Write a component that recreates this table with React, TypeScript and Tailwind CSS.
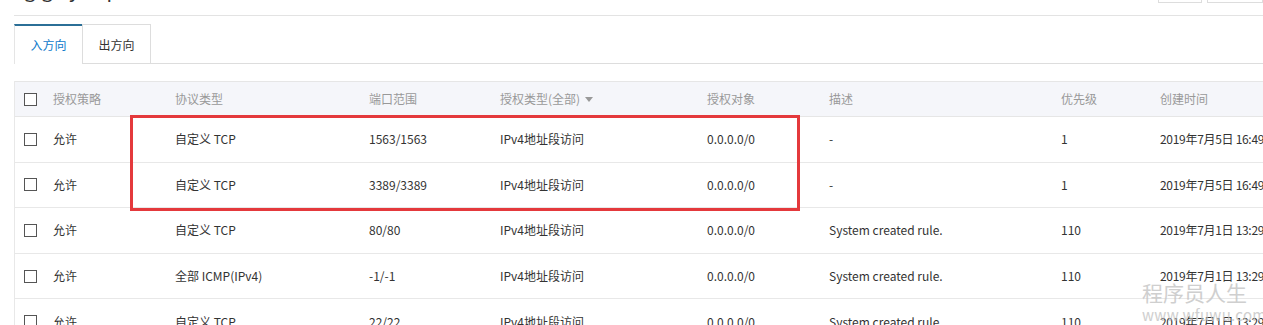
import React from 'react'

const cols = 'grid grid-cols-[38px_122px_194px_131px_207px_122px_232px_99px_1fr]'

const rows = [
  { proto: '自定义 TCP', port: '1563/1563', desc: '-', prio: '1', time: '2019年7月5日 16:49:12' },
  { proto: '自定义 TCP', port: '3389/3389', desc: '-', prio: '1', time: '2019年7月5日 16:49:12' },
  { proto: '自定义 TCP', port: '80/80', desc: 'System created rule.', prio: '110', time: '2019年7月1日 13:29:40' },
  { proto: '全部 ICMP(IPv4)', port: '-1/-1', desc: 'System created rule.', prio: '110', time: '2019年7月1日 13:29:40' },
  { proto: '自定义 TCP', port: '22/22', desc: 'System created rule.', prio: '110', time: '2019年7月1日 13:29:40' },
]

function Box() {
  return <span className="block w-[13px] h-[13px] border border-[#555] bg-white" />
}

export default function App() {
  return (
    <div
      className="relative w-[1263px] h-[325px] overflow-hidden bg-white text-[12px] text-[#333]"
      style={{ fontFamily: '"Noto Sans CJK SC", "Noto Sans", sans-serif' }}
    >
      {/* page head */}
      <div className="flex items-end justify-between h-[16px] pl-[10px] border-b border-[#e3e3e3] ml-[14px]">
        <div className="text-[20px] leading-none text-[#333] mb-[16px] tracking-[6px]">gg y&nbsp;&nbsp;p</div>
        <div className="flex gap-[5px] self-start -mt-[20px]">
          <span className="block w-[44px] h-[23px] border border-[#ddd]" />
          <span className="block w-[56px] h-[23px] border border-[#ddd]" />
        </div>
      </div>

      {/* tabs */}
      <div className="flex mt-[8px] ml-[14px] h-[40px] border-b border-[#ddd]">
        <div className="w-[68px] h-[40px] -mb-px border-t-2 border-l border-[#2b6f97] border-l-[#e5e5e5] bg-white flex items-center justify-center text-[#0f7acb]">
          入方向
        </div>
        <div className="w-[69px] h-[40px] border-t border-r border-l border-[#ddd] flex items-center justify-center text-[#333]">
          出方向
        </div>
      </div>

      {/* table */}
      <div className="ml-[14px] mt-[17px] w-[1300px] border-l border-[#e8e8e8]">
        <div className={`${cols} h-[36px] items-center bg-[#f5f6fa] border-t border-b border-[#e6e6e6] text-[#999]`}>
          <div className="pl-[9px]"><Box /></div>
          <div>授权策略</div>
          <div>协议类型</div>
          <div>端口范围</div>
          <div className="flex items-center gap-[5px]">
            授权类型(全部)
            <svg width="8" height="5" viewBox="0 0 8 5"><path d="M0 0h8L4 5z" fill="#999" /></svg>
          </div>
          <div>授权对象</div>
          <div>描述</div>
          <div>优先级</div>
          <div>创建时间</div>
        </div>
        {rows.map((r, i) => (
          <div key={i} className={`${cols} h-[45.6px] items-center border-b border-[#e8e8e8]`}>
            <div className="pl-[9px]"><Box /></div>
            <div>允许</div>
            <div>{r.proto}</div>
            <div>{r.port}</div>
            <div>IPv4地址段访问</div>
            <div>0.0.0.0/0</div>
            <div>{r.desc}</div>
            <div>{r.prio}</div>
            <div className="whitespace-nowrap tracking-[-0.3px]">{r.time}</div>
          </div>
        ))}
      </div>

      {/* highlight box */}
      <div className="absolute left-[130px] top-[115px] w-[670px] h-[96px] border-[3px] border-[#e4393c]" />

      {/* watermark */}
      <div className="absolute left-[1142px] top-[280px] flex flex-col items-start text-[#c4c4c4] opacity-80 pointer-events-none">
        <div className="text-[21px] leading-[24px]">程序员人生</div>
        <div className="text-[15px] leading-[16px] mt-[3px] tracking-[0.3px]">www.wfuwu.com</div>
      </div>
    </div>
  )
}
